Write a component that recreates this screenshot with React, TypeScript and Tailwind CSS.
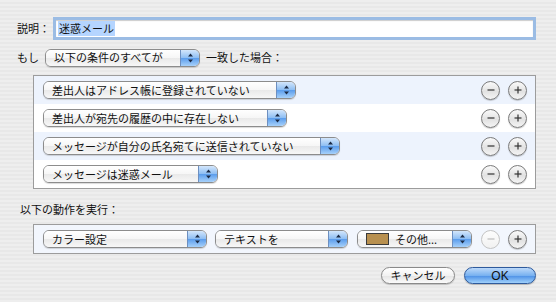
import React from "react";

type PopupProps = {
  width: string;
  label: string;
  swatch?: boolean;
};

const Arrows = () => (
  <svg width="7" height="10" viewBox="0 0 7 10" className="block">
    <path d="M3.5 0.5 L6 3.5 L1 3.5 Z" fill="#1b2a44" />
    <path d="M3.5 9.5 L6 6.5 L1 6.5 Z" fill="#1b2a44" />
  </svg>
);

const Popup = ({ width, label, swatch }: PopupProps) => (
  <div
    className={`${width} flex h-[18px] items-stretch overflow-hidden rounded-[6px] border border-[#8c8c8c] shadow-[0_1px_1px_rgba(0,0,0,0.15)]`}
  >
    <div className="flex flex-1 items-center gap-[6px] bg-[linear-gradient(to_bottom,#ffffff,#f6f6f6_50%,#e9e9e9_51%,#f7f7f7)] pl-[8px] text-[11px] leading-none text-[#111]">
      {swatch && (
        <span className="h-[12px] w-[23px] border border-[#3a3a3a] bg-[#b8904f]" />
      )}
      <span>{label}</span>
    </div>
    <div className="flex w-[19px] items-center justify-center border-l border-[#6d8fc0] bg-[linear-gradient(to_bottom,#d3e6fb,#8cbdf3_50%,#5a9cec_51%,#a7d1fa)]">
      <Arrows />
    </div>
  </div>
);

const CircleBtn = ({ sign, disabled }: { sign: "-" | "+"; disabled?: boolean }) => (
  <div
    className={`flex h-[19px] w-[19px] items-center justify-center rounded-full border ${
      disabled
        ? "border-[#c4c4c4] bg-[linear-gradient(to_bottom,#fdfdfd,#f1f1f1)]"
        : "border-[#7b7b7b] bg-[linear-gradient(to_bottom,#fafafa,#e2e2e2_55%,#f4f4f4)] shadow-[0_1px_1px_rgba(0,0,0,0.2)]"
    }`}
  >
    <svg width="12" height="12" viewBox="0 0 12 12">
      <path
        d="M2.5 6 H9.5"
        stroke={disabled ? "#bdbdbd" : "#333"}
        strokeWidth="1.2"
      />
      {sign === "+" && (
        <path d="M6 2.5 V9.5" stroke="#333" strokeWidth="1.2" />
      )}
    </svg>
  </div>
);

const conditions = [
  { label: "差出人はアドレス帳に登録されていない", width: "w-[253px]" },
  { label: "差出人が宛先の履歴の中に存在しない", width: "w-[244px]" },
  { label: "メッセージが自分の氏名宛てに送信されていない", width: "w-[297px]" },
  { label: "メッセージは迷惑メール", width: "w-[175px]" },
];

export default function App() {
  return (
    <div className="flex h-[302px] w-[556px] flex-col bg-[repeating-linear-gradient(to_bottom,#eeeeee_0px,#eeeeee_2px,#e8e8e8_2px,#e8e8e8_4px)] pl-[17px] pr-[20px] pt-[17px] font-['Noto_Sans_CJK_JP',sans-serif] text-[11px] text-[#111]">
      {/* description */}
      <div className="flex h-[23px] items-center">
        <span className="w-[36px]">説明：</span>
        <div className="flex h-[23px] flex-1 items-center border-[3px] border-[#9bbce4] bg-white pl-[2px] shadow-[inset_0_1px_1px_rgba(0,0,0,0.2)]">
          <span className="bg-[#b5d5ff] px-[1px] leading-[15px]">迷惑メール</span>
        </div>
      </div>

      {/* if */}
      <div className="mt-[8px] flex h-[19px] items-center">
        <span className="w-[28px]">もし</span>
        <Popup width="w-[155px]" label="以下の条件のすべてが" />
        <span className="ml-[6px]">一致した場合：</span>
      </div>

      {/* conditions */}
      <div className="ml-[16px] mt-[8px] border border-[#9c9c9c]">
        {conditions.map((c, i) => (
          <div
            key={i}
            className={`flex h-[28px] items-center justify-between pl-[9px] pr-[8px] ${
              i % 2 === 0 ? "bg-[#edf3fd]" : "bg-white"
            }`}
          >
            <Popup width={c.width} label={c.label} />
            <div className="flex gap-[8px]">
              <CircleBtn sign="-" />
              <CircleBtn sign="+" />
            </div>
          </div>
        ))}
      </div>

      {/* actions */}
      <div className="ml-[3px] mt-[13px] leading-[14px]">以下の動作を実行：</div>
      <div className="ml-[16px] mt-[8px] flex h-[30px] items-center border border-[#9c9c9c] bg-[#f2f6fd] pl-[9px] pr-[8px]">
        <Popup width="w-[164px]" label="カラー設定" />
        <div className="ml-[8px]">
          <Popup width="w-[133px]" label="テキストを" />
        </div>
        <div className="ml-[9px]">
          <Popup width="w-[115px]" label="その他..." swatch />
        </div>
        <div className="ml-auto flex gap-[8px]">
          <CircleBtn sign="-" disabled />
          <CircleBtn sign="+" />
        </div>
      </div>

      {/* buttons */}
      <div className="mt-[13px] flex justify-end gap-[9px]">
        <div className="flex h-[17px] w-[74px] items-center justify-center rounded-full border border-[#8a8a8a] bg-[linear-gradient(to_bottom,#ffffff,#f2f2f2_50%,#e4e4e4_51%,#fbfbfb)] shadow-[0_1px_1px_rgba(0,0,0,0.2)]">
          キャンセル
        </div>
        <div className="flex h-[17px] w-[72px] items-center justify-center rounded-full border border-[#2e5a9c] bg-[linear-gradient(to_bottom,#bcd9fa,#78b1f0_50%,#4b8fe6_51%,#9fd0fb)] font-['Liberation_Sans',sans-serif] text-[12px] shadow-[0_1px_1px_rgba(0,0,0,0.25)]">
          OK
        </div>
      </div>
    </div>
  );
}
